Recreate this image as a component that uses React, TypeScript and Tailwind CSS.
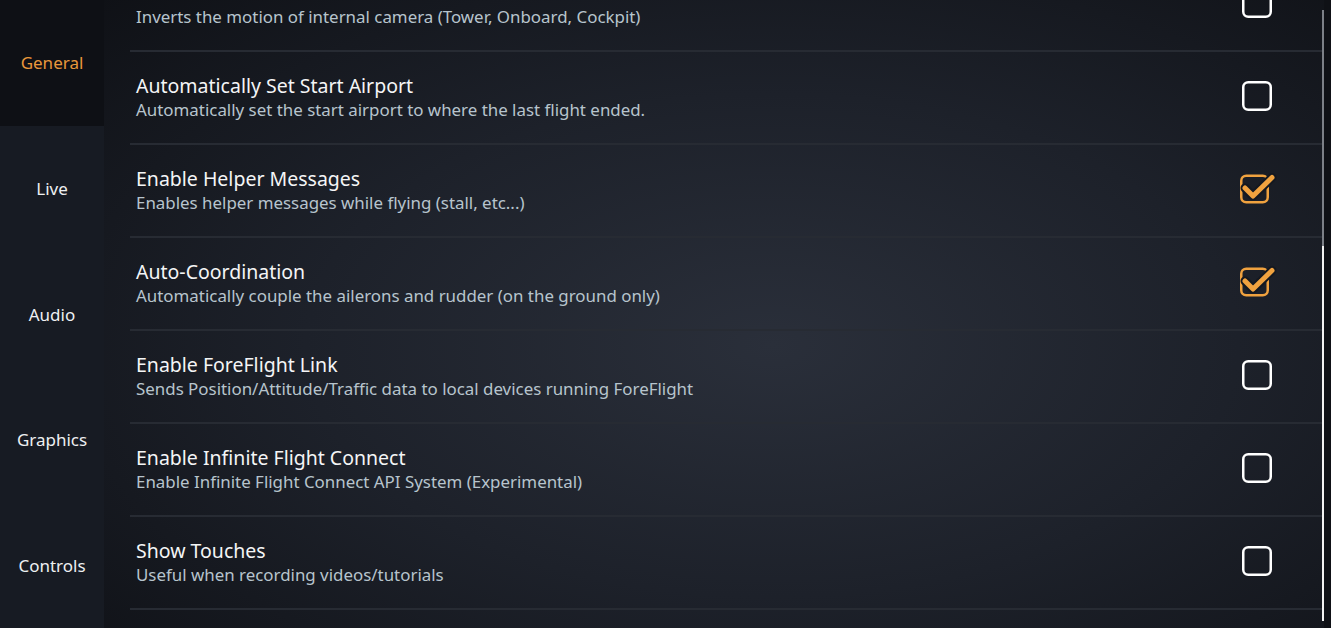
import { useState } from "react";

type Setting = {
  title: string;
  desc: string;
  checked: boolean;
};

const settings: Setting[] = [
  {
    title: "Invert Internal Camera",
    desc: "Inverts the motion of internal camera (Tower, Onboard, Cockpit)",
    checked: false,
  },
  {
    title: "Automatically Set Start Airport",
    desc: "Automatically set the start airport to where the last flight ended.",
    checked: false,
  },
  {
    title: "Enable Helper Messages",
    desc: "Enables helper messages while flying (stall, etc...)",
    checked: true,
  },
  {
    title: "Auto-Coordination",
    desc: "Automatically couple the ailerons and rudder (on the ground only)",
    checked: true,
  },
  {
    title: "Enable ForeFlight Link",
    desc: "Sends Position/Attitude/Traffic data to local devices running ForeFlight",
    checked: false,
  },
  {
    title: "Enable Infinite Flight Connect",
    desc: "Enable Infinite Flight Connect API System (Experimental)",
    checked: false,
  },
  {
    title: "Show Touches",
    desc: "Useful when recording videos/tutorials",
    checked: false,
  },
];

const tabs = ["General", "Live", "Audio", "Graphics", "Controls"];

const CheckBox = ({ checked }: { checked: boolean }) => {
  if (!checked) {
    return (
      <svg width="40" height="40" viewBox="0 0 40 40" className="mb-[4px] shrink-0">
        <rect
          x="6.25"
          y="6.25"
          width="27.5"
          height="27.5"
          rx="5"
          fill="none"
          stroke="#ffffff"
          strokeWidth="2.5"
        />
      </svg>
    );
  }
  return (
    <svg width="40" height="40" viewBox="0 0 40 40" className="mb-[4px] shrink-0">
      <rect
        x="4.25"
        y="6.75"
        width="26.5"
        height="26.5"
        rx="5"
        fill="none"
        stroke="#f0a23f"
        strokeWidth="2.5"
      />
      <polyline
        points="8,19 16,27 35,8.5"
        fill="none"
        stroke="#141820"
        strokeWidth="9"
        strokeLinecap="round"
        strokeLinejoin="round"
      />
      <polyline
        points="8,19 16,27 35,8.5"
        fill="none"
        stroke="#f0a23f"
        strokeWidth="5"
        strokeLinecap="round"
        strokeLinejoin="round"
      />
    </svg>
  );
};

const SettingRow = ({ item }: { item: Setting }) => {
  const [on, setOn] = useState(item.checked);
  return (
    <li
      className="flex h-[93px] cursor-pointer items-center justify-between border-b-2 border-[#272b33] pl-[6px] pr-[45px]"
      onClick={() => setOn(!on)}
    >
      <div className="flex flex-col">
        <h3 className="text-[19.5px] leading-[25px] text-[#f4f5f6]">
          {item.title}
        </h3>
        <p className="text-[16.9px] leading-[24px] text-[#b7c4cd]">
          {item.desc}
        </p>
      </div>
      <CheckBox checked={on} />
    </li>
  );
};

export default function App() {
  const [tab, setTab] = useState("General");

  return (
    <div
      className="flex h-[628px] w-[1331px] overflow-hidden bg-[radial-gradient(ellipse_70%_80%_at_58%_55%,#2a2f3a_0%,#1d212a_50%,#0f1116_100%)]"
      style={{ fontFamily: '"Noto Sans", "Open Sans", sans-serif' }}
    >
      <nav className="flex w-[104px] shrink-0 flex-col">
        {tabs.map((t) => (
          <button
            key={t}
            onClick={() => setTab(t)}
            className={
              t === tab
                ? "flex h-[126px] items-center justify-center bg-[#0e1015] text-[17px] text-[#e8973b]"
                : "flex h-[126px] items-center justify-center bg-[#171b23] pt-[1px] text-[17px] text-[#eef0f2]"
            }
          >
            {t}
          </button>
        ))}
      </nav>
      <main className="flex flex-1 flex-col overflow-hidden pl-[26px]">
        <ul className="mt-[-41px] flex flex-col">
          {settings.map((s) => (
            <SettingRow key={s.title} item={s} />
          ))}
        </ul>
      </main>
      <div className="mb-[7px] mt-[10px] flex w-[2px] shrink-0 flex-col">
        <div className="h-[236px] bg-[#7c8087]" />
        <div className="flex-1 bg-[#f2f2f2]" />
      </div>
      <div className="w-[7px] shrink-0 bg-[#0f1116]" />
    </div>
  );
}
